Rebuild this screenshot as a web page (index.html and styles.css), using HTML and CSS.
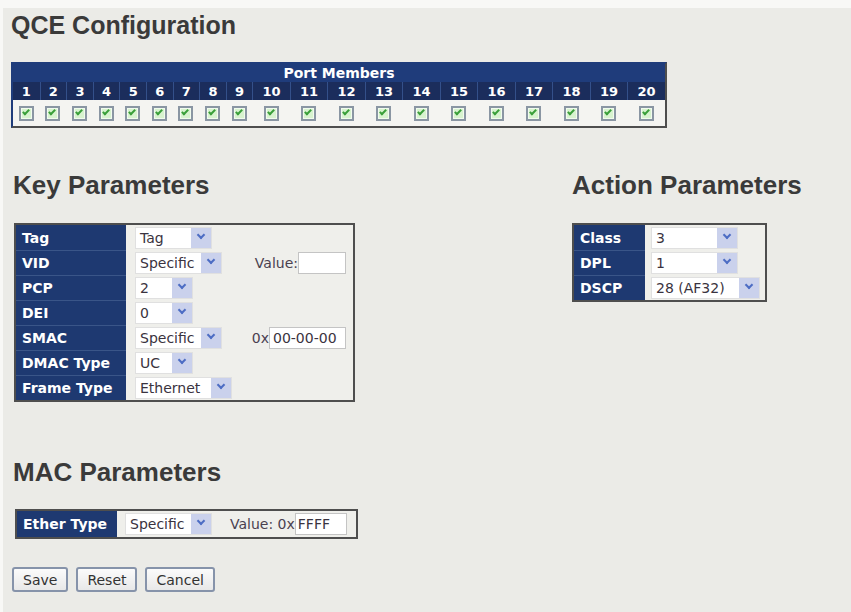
FILE: index.html
```html
<!DOCTYPE html>
<html lang="en">
<head>
  <meta charset="UTF-8">
  <title>QCE Configuration</title>
  <link rel="stylesheet" href="styles.css">
</head>
<body>
<div class="page">
  <h1>QCE Configuration</h1>

  <div class="ports">
    <div class="ports-title">Port Members</div>
    <div class="ports-row ports-nums">
      <span>1</span><span>2</span><span>3</span><span>4</span><span>5</span>
      <span>6</span><span>7</span><span>8</span><span>9</span><span>10</span>
      <span>11</span><span>12</span><span>13</span><span>14</span><span>15</span>
      <span>16</span><span>17</span><span>18</span><span>19</span><span>20</span>
    </div>
    <div class="ports-row ports-checks">
      <span><i class="cb"></i></span><span><i class="cb"></i></span><span><i class="cb"></i></span><span><i class="cb"></i></span><span><i class="cb"></i></span>
      <span><i class="cb"></i></span><span><i class="cb"></i></span><span><i class="cb"></i></span><span><i class="cb"></i></span><span><i class="cb"></i></span>
      <span><i class="cb"></i></span><span><i class="cb"></i></span><span><i class="cb"></i></span><span><i class="cb"></i></span><span><i class="cb"></i></span>
      <span><i class="cb"></i></span><span><i class="cb"></i></span><span><i class="cb"></i></span><span><i class="cb"></i></span><span><i class="cb"></i></span>
    </div>
  </div>

  <div class="params">
    <div class="key">
      <h2>Key Parameters</h2>
      <div class="cfg cfg-key">
        <div class="row"><div class="lbl">Tag</div><div class="val"><span class="sel w77"><span class="txt">Tag</span><span class="arr"></span></span></div></div>
        <div class="row"><div class="lbl">VID</div><div class="val"><span class="sel w87"><span class="txt">Specific</span><span class="arr"></span></span><span class="extra">Value:<span class="inp w48"></span></span></div></div>
        <div class="row"><div class="lbl">PCP</div><div class="val"><span class="sel w58"><span class="txt">2</span><span class="arr"></span></span></div></div>
        <div class="row"><div class="lbl">DEI</div><div class="val"><span class="sel w58"><span class="txt">0</span><span class="arr"></span></span></div></div>
        <div class="row"><div class="lbl">SMAC</div><div class="val"><span class="sel w87"><span class="txt">Specific</span><span class="arr"></span></span><span class="extra">0x<span class="inp w77">00-00-00</span></span></div></div>
        <div class="row"><div class="lbl">DMAC Type</div><div class="val"><span class="sel w58"><span class="txt">UC</span><span class="arr"></span></span></div></div>
        <div class="row"><div class="lbl">Frame Type</div><div class="val"><span class="sel w97"><span class="txt">Ethernet</span><span class="arr"></span></span></div></div>
      </div>
    </div>

    <div class="action">
      <h2>Action Parameters</h2>
      <div class="cfg cfg-action">
        <div class="row"><div class="lbl">Class</div><div class="val"><span class="sel w87"><span class="txt">3</span><span class="arr"></span></span></div></div>
        <div class="row"><div class="lbl">DPL</div><div class="val"><span class="sel w87"><span class="txt">1</span><span class="arr"></span></span></div></div>
        <div class="row"><div class="lbl">DSCP</div><div class="val"><span class="sel w109"><span class="txt">28 (AF32)</span><span class="arr"></span></span></div></div>
      </div>
    </div>
  </div>

  <h2 class="mac-title">MAC Parameters</h2>
  <div class="cfg cfg-mac">
    <div class="row"><div class="lbl">Ether Type</div><div class="val"><span class="sel w87"><span class="txt">Specific</span><span class="arr"></span></span><span class="mac-value">Value: 0x<span class="inp w52">FFFF</span></span></div></div>
  </div>

  <div class="buttons">
    <button class="btn">Save</button>
    <button class="btn">Reset</button>
    <button class="btn">Cancel</button>
  </div>
</div>
</body>
</html>
```

FILE: styles.css
```css
*,*::before,*::after{box-sizing:border-box;margin:0;padding:0}
:root{
  --navy:#1e3971;--navy-hdr:#1f3c7b;--navy-num:#1b2d5c;
  --bg:#ebebe7;--cell:#efefeb;--frame:#4e4e4e;--ink:#3a3a3a;
}
body{background:#f8f8f6;font-family:"DejaVu Sans",Verdana,sans-serif;font-size:14px;color:#3a3340}
.page{margin:8px 0 0 3px;min-height:604px;background:var(--bg);padding:3px 0 0 8px}

h1,h2{font-family:"Liberation Sans",Arial,sans-serif;font-weight:bold;font-size:25px;line-height:29px;color:var(--ink)}
h2{font-size:26px;margin:43px 0 23px 2px}

/* port members grid */
.ports{width:656px;margin-top:22px;border:2px solid var(--frame);border-top-color:var(--navy-hdr);border-left-color:var(--navy-hdr)}
.ports-title{height:18px;line-height:18px;text-align:center;background:var(--navy-hdr);color:#fff;font-weight:bold}
.ports-row{display:grid;grid-template-columns:repeat(9,26.6px) repeat(11,37.5px)}
.ports-nums{height:18px;background:#35528c}
.ports-nums span{display:flex;align-items:center;justify-content:center;background:var(--navy-num);color:#fff;font-weight:bold;font-size:13px;border-left:1px solid #34508a}
.ports-nums span:first-child{border-left:none}
.ports-checks{height:26px;background:#f4f4f1}
.ports-checks span{display:flex;align-items:center;justify-content:center}
.cb{position:relative;width:15px;height:15px;border:2px solid #8a96a3;background:#d8f3cf;box-shadow:inset 0 0 0 1px #f1fbee}
.cb::after{content:"";position:absolute;left:3px;top:0;width:4px;height:7px;border-right:2px solid #3a9f3a;border-bottom:2px solid #3a9f3a;transform:rotate(45deg)}

/* key / action blocks */
.params{display:flex}
.key{width:561px}
.key h2{margin-left:2px}
.action h2{margin-left:0}
.cfg{border:2px solid var(--frame);background:var(--cell)}
.cfg-key{width:341px;margin-left:3px}
.cfg-action{width:195px}
.row{display:flex;height:25px}
.lbl{display:flex;align-items:center;background:var(--navy);color:#fff;font-weight:bold;padding-left:6px;border-top:1px solid #3a5588}
.row:first-child .lbl{border-top:none}
.val{flex:1;display:flex;align-items:center}
.cfg-key .lbl{width:110px}
.cfg-key .val{padding:0 7px 0 9px}
.cfg-action .lbl{width:71px}
.cfg-action .val{padding-left:6px}

.sel{display:inline-flex;height:22px;background:#fff;border:1px solid #e0e0e0}
.sel .txt{flex:1;padding-left:4px;line-height:20px;white-space:nowrap;overflow:hidden}
.sel .arr{position:relative;width:20px;background:#cad1ec}
.sel .arr::after{content:"";position:absolute;left:7px;top:4px;width:6px;height:6px;border-right:2px solid #4d6dc4;border-bottom:2px solid #4d6dc4;transform:rotate(45deg)}
.w58{width:58px}.w77{width:77px}.w87{width:87px}.w97{width:97px}.w109{width:109px}
.w48{width:48px}.w52{width:52px}

.extra{margin-left:auto;display:flex;align-items:center;color:#4a4150}
.inp{display:inline-block;height:22px;line-height:20px;background:#fff;border:1px solid #c4c4c4;padding-left:2px;color:#3a3340}
.extra .w77{padding-left:3px}

/* mac block */
.mac-title{margin:56px 0 22px 2px}
.cfg-mac{width:343px;margin-left:4px}
.cfg-mac .row{height:26px}
.cfg-mac .lbl{width:100px}
.cfg-mac .val{padding-left:8px}
.mac-value{display:flex;align-items:center;margin-left:18px;color:#4a4150}

.buttons{display:flex;gap:8px;margin:28px 0 0 1px}
.btn{height:25px;padding:0 9px;font-family:"DejaVu Sans",Verdana,sans-serif;font-size:14px;color:#333;background:linear-gradient(#fbfbfb,#e8e8e8);border:2px solid #8693aa;border-radius:3px}
```
